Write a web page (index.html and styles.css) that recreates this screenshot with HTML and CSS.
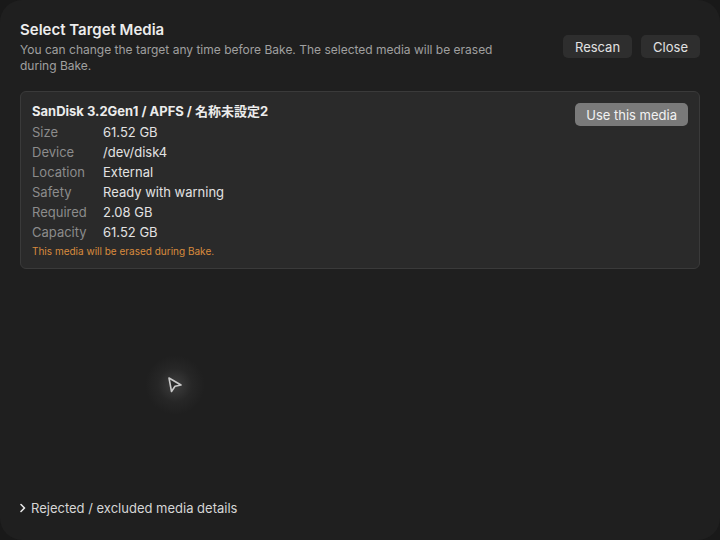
FILE: index.html
```html
<!DOCTYPE html>
<html>
<head>
<meta charset="utf-8">
<link rel="stylesheet" href="styles.css">
</head>
<body>
<div class="dialog">
  <header class="header">
    <div class="intro">
      <h1 class="title">Select Target Media</h1>
      <p class="subtitle">You can change the target any time before Bake. The selected media will be erased during Bake.</p>
    </div>
    <div class="actions">
      <button class="btn">Rescan</button>
      <button class="btn">Close</button>
    </div>
  </header>

  <section class="card">
    <div class="info">
      <div class="card-title">SanDisk 3.2Gen1 / APFS / 名称未設定2</div>
      <dl class="props">
        <dt>Size</dt><dd>61.52 GB</dd>
        <dt>Device</dt><dd>/dev/disk4</dd>
        <dt>Location</dt><dd>External</dd>
        <dt>Safety</dt><dd>Ready with warning</dd>
        <dt>Required</dt><dd>2.08 GB</dd>
        <dt>Capacity</dt><dd>61.52 GB</dd>
      </dl>
      <div class="warning">This media will be erased during Bake.</div>
    </div>
    <button class="btn-use">Use this media</button>
  </section>

  <footer class="footer">
    <svg class="chev" width="8" height="10" viewBox="0 0 8 10"><path d="M2 1.5 L5.5 5 L2 8.5" fill="none" stroke="#e6e6e6" stroke-width="1.6" stroke-linecap="round" stroke-linejoin="round"/></svg>
    <span>Rejected / excluded media details</span>
  </footer>

  <div class="cursor">
    <svg width="20" height="20" viewBox="0 0 20 20"><path d="M4 3 L16 10 L10 11.2 L6.5 16.5 Z" fill="#2a2a2a" stroke="#c8c8c8" stroke-width="1.6" stroke-linejoin="round"/></svg>
  </div>
</div>
</body>
</html>
```
FILE: styles.css
```css
* { box-sizing: border-box; }
html, body { margin: 0; padding: 0; }
body {
  background: #191919;
  width: 720px;
  height: 540px;
  overflow: hidden;
  font-family: "Inter", "Noto Sans CJK JP", sans-serif;
  color: #e4e4e4;
}
.dialog {
  position: relative;
  height: 540px;
  background: #1f1f1f;
  border-radius: 22px;
  padding: 21px 20px 24px 20px;
  display: flex;
  flex-direction: column;
}
.header {
  display: flex;
  justify-content: space-between;
  align-items: center;
}
.intro { width: 490px; }
.title {
  margin: 0;
  font-size: 15px;
  line-height: 18px;
  font-weight: 600;
  color: #ececec;
}
.subtitle {
  margin: 3px 0 0 0;
  font-size: 12px;
  line-height: 16px;
  color: #a0a0a0;
}
.actions {
  display: flex;
  gap: 9px;
  margin-top: -2px;
}
.btn {
  font-family: inherit;
  font-size: 13px;
  color: #e2e2e2;
  background: #2e2e2e;
  border: none;
  border-radius: 5px;
  height: 23px;
  padding: 0 12px;
}
.card {
  margin-top: 17px;
  background: #2a2a2a;
  border: 1px solid #3a3a3a;
  border-radius: 6px;
  padding: 11px 11px 11px 11px;
  display: flex;
  justify-content: space-between;
  align-items: flex-start;
}
.card-title {
  font-size: 13px;
  line-height: 16px;
  font-weight: 700;
  color: #ececec;
}
.props {
  margin: 3px 0 0 0;
  display: grid;
  grid-template-columns: 71px auto;
  font-size: 13px;
  line-height: 20px;
}
.props dt { color: #8c8c8c; }
.props dd { margin: 0; color: #e2e2e2; }
.warning {
  margin-top: 3px;
  font-size: 10px;
  line-height: 12px;
  color: #d98a3d;
}
.btn-use {
  font-family: inherit;
  font-size: 13px;
  color: #f2f2f2;
  background: #7a7a7a;
  border: none;
  border-radius: 5px;
  height: 23px;
  padding: 0 11px;
}
.footer {
  margin-top: auto;
  display: flex;
  align-items: center;
  gap: 4px;
  font-size: 13px;
  line-height: 16px;
  color: #d6d6d6;
}
.chev { margin-left: -1px; }
.cursor {
  position: absolute;
  left: 145px;
  top: 355px;
  width: 60px;
  height: 60px;
  border-radius: 50%;
  background: radial-gradient(circle, rgba(120,120,120,0.35) 0%, rgba(80,80,80,0.15) 40%, rgba(31,31,31,0) 70%);
  display: flex;
  align-items: center;
  justify-content: center;
}
```
